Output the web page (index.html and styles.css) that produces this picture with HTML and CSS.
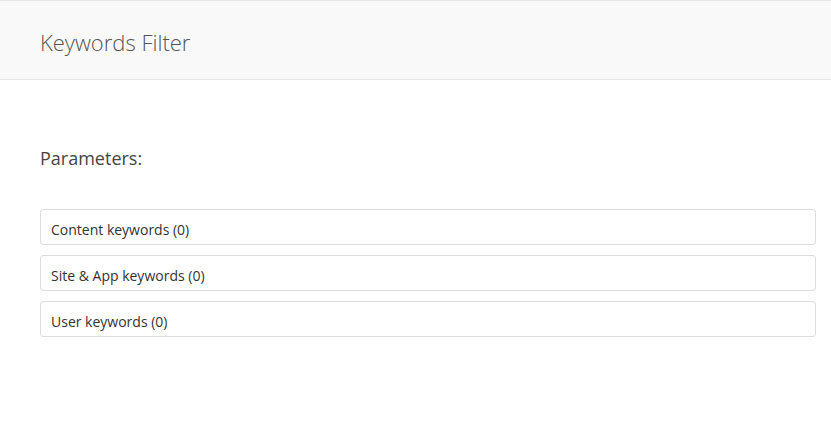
FILE: index.html
```html
<!DOCTYPE html>
<html>
<head>
<meta charset="utf-8">
<link rel="stylesheet" href="styles.css">
</head>
<body>
<header class="page-header">
  <h1 class="page-title">Keywords Filter</h1>
</header>
<main class="content">
  <h2 class="section-title">Parameters:</h2>
  <div class="panel-list">
    <div class="panel">Content keywords (0)</div>
    <div class="panel">Site &amp; App keywords (0)</div>
    <div class="panel">User keywords (0)</div>
  </div>
</main>
</body>
</html>
```
FILE: styles.css
```css
html, body {
  margin: 0;
  padding: 0;
  background: #ffffff;
  font-family: "Open Sans", "Liberation Sans", sans-serif;
}
.page-header {
  border-top: 1px solid #e6e6e6;
  border-bottom: 1px solid #e6e6e6;
  background: #f9f9f9;
  height: 75px;
  padding: 3px 40px 0;
  display: flex;
  align-items: center;
}
.page-title {
  margin: 0;
  font-size: 22px;
  font-weight: 300;
  color: #555;
  line-height: 30px;
}
.content {
  padding: 66px 15px 0 40px;
}
.section-title {
  margin: 0;
  font-size: 18px;
  font-weight: 400;
  color: #444;
  line-height: 24px;
}
.panel-list {
  margin-top: 39px;
  display: flex;
  flex-direction: column;
  gap: 10px;
}
.panel {
  border: 1px solid #dcdcdc;
  border-radius: 3px;
  height: 29px;
  padding: 5px 10px 0;
  display: flex;
  align-items: center;
  font-size: 14px;
  color: #333;
}
```
